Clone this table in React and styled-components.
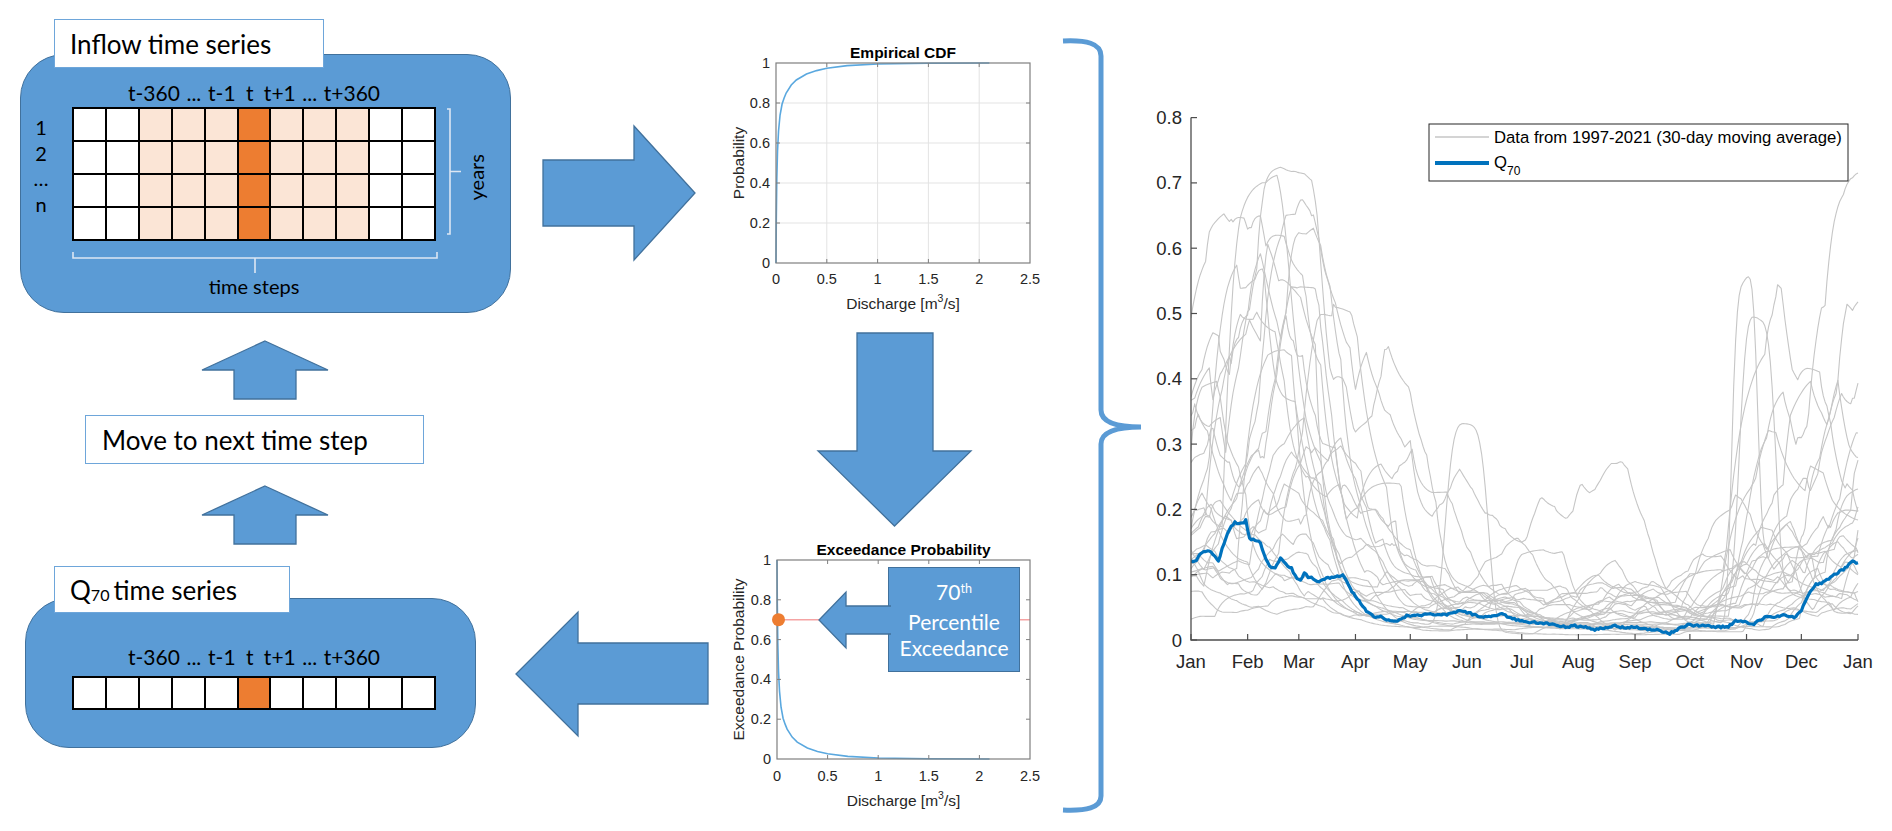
import React from "react";
import styled, { createGlobalStyle } from "styled-components";

const BLUE = "#5b9bd5";
const BLUE_EDGE = "#41719c";
const ORANGE = "#ed7d31";
const PEACH = "#fbe5d6";
const BRACKET = "#dde7f3";
const GREY_LINE = "#c6c6c6";
const Q_BLUE = "#0072bd";

const GlobalStyle = createGlobalStyle`
  html, body {
    margin: 0;
    padding: 0;
    background: #fff;
  }
  body {
    font-family: Lato, "Open Sans", sans-serif;
    color: #000;
  }
`;

const Page = styled.div`
  width: 1892px;
  height: 831px;
  display: flex;
  overflow: hidden;
  background: #fff;
`;

/* ---------- left column: series panels ---------- */

const FlowColumn = styled.div`
  flex: none;
  width: 516px;
  display: flex;
  flex-direction: column;
  padding-top: 19px;
  box-sizing: border-box;
`;

const Tab = styled.div`
  position: relative;
  z-index: 1;
  box-sizing: border-box;
  width: ${(p) => p.$width}px;
  height: ${(p) => p.$height}px;
  margin-left: ${(p) => p.$left}px;
  margin-top: ${(p) => p.$top || 0}px;
  padding-left: 15px;
  display: flex;
  align-items: center;
  background: #fff;
  border: 1.5px solid #6ea6da;
  font-size: 26px;
  white-space: nowrap;
`;

const Sub = styled.span`
  position: relative;
  top: 0.32em;
  font-size: 0.62em;
  margin-right: 0.25em;
`;

const Sup = styled.span`
  position: relative;
  top: -0.55em;
  font-size: 0.6em;
`;

const SeriesCard = styled.div`
  box-sizing: border-box;
  width: ${(p) => p.$width}px;
  height: ${(p) => p.$height}px;
  margin-left: ${(p) => p.$left}px;
  margin-top: ${(p) => p.$overlap}px;
  padding-top: ${(p) => p.$padTop}px;
  display: flex;
  flex-direction: column;
  background: ${BLUE};
  border: 1px solid ${BLUE_EDGE};
  border-radius: 44px;
`;

const StepLabels = styled.div`
  display: grid;
  grid-template-columns: repeat(11, 1fr);
  width: 364px;
  height: 24px;
  margin-left: ${(p) => p.$offset}px;
  margin-bottom: ${(p) => p.$gap}px;
  font-size: 21px;
  line-height: 24px;
`;

const StepLabel = styled.div`
  display: flex;
  justify-content: center;
  white-space: nowrap;
`;

const MatrixRow = styled.div`
  display: flex;
  align-items: flex-start;
  margin-left: ${(p) => p.$offset || 0}px;
`;

const RowIndex = styled.div`
  flex: none;
  width: 20px;
  margin-left: 10px;
  margin-right: 21px;
  padding-top: 8px;
  display: flex;
  flex-direction: column;
  align-items: center;
  font-size: 20px;
  line-height: 25.5px;
`;

const Matrix = styled.div`
  flex: none;
  box-sizing: border-box;
  width: 364px;
  height: ${(p) => p.$rows * 33.5}px;
  display: grid;
  grid-template-columns: repeat(11, 1fr);
  grid-template-rows: repeat(${(p) => p.$rows}, 1fr);
  border-top: 2px solid #000;
  border-left: 2px solid #000;
  background: #000;
`;

const Cell = styled.div`
  box-sizing: border-box;
  border-right: 2px solid #000;
  border-bottom: 2px solid #000;
  background: ${(p) =>
    p.$tone === "current" ? ORANGE : p.$tone === "window" ? PEACH : "#fff"};
`;

const SideBracket = styled.svg`
  flex: none;
  display: block;
  margin-left: 10px;
  margin-top: 1px;
`;

const YearsLabel = styled.div`
  align-self: center;
  margin-left: 3px;
  margin-top: 6px;
  writing-mode: vertical-rl;
  transform: rotate(180deg);
  font-size: 20px;
  line-height: 22px;
`;

const BottomBracket = styled.svg`
  display: block;
  margin-left: ${(p) => p.$offset}px;
  margin-top: 11px;
`;

const AxisCaption = styled.div`
  width: 364px;
  margin-left: ${(p) => p.$offset}px;
  text-align: center;
  font-size: 20px;
  line-height: 24px;
`;

const NoteBox = styled.div`
  box-sizing: border-box;
  width: 339px;
  height: 49px;
  margin-left: 85px;
  margin-top: 16px;
  padding-left: 16px;
  display: flex;
  align-items: center;
  background: #fff;
  border: 1.5px solid #6ea6da;
  font-size: 26px;
  white-space: nowrap;
`;

/* ---------- block arrows ---------- */

const BlockArrow = styled.svg`
  flex: none;
  display: block;
  overflow: visible;
  margin-top: ${(p) => p.$top || 0}px;
  margin-left: ${(p) => p.$left || 0}px;
`;

const ArrowFill = styled.polygon`
  fill: ${BLUE};
  stroke: ${BLUE_EDGE};
  stroke-width: 1.3;
  stroke-linejoin: miter;
`;

const ArrowColumn = styled.div`
  flex: none;
  width: 200px;
  display: flex;
  flex-direction: column;
`;

/* ---------- middle column: probability plots ---------- */

const PlotColumn = styled.div`
  flex: none;
  width: 340px;
  padding-top: 40px;
  display: flex;
  flex-direction: column;
`;

const PlotFrame = styled.div`
  position: relative;
  width: 340px;
  height: ${(p) => p.$height}px;
  margin-top: ${(p) => p.$top || 0}px;
`;

const PlotSvg = styled.svg`
  display: block;
  overflow: visible;
`;

const PlotText = styled.text`
  font-family: "Liberation Sans", Arial, sans-serif;
  font-size: ${(p) => p.$size || 14.5}px;
  font-weight: ${(p) => (p.$bold ? 700 : 400)};
  fill: ${(p) => p.$color || "#262626"};
`;

const Callout = styled.div`
  position: absolute;
  left: 103px;
  top: 37px;
  display: flex;
  align-items: center;
`;

const CalloutBox = styled.div`
  box-sizing: border-box;
  width: 132px;
  height: 105px;
  display: flex;
  flex-direction: column;
  align-items: center;
  justify-content: center;
  background: ${BLUE};
  border: 1.3px solid ${BLUE_EDGE};
  color: #fff;
  font-size: 21px;
  line-height: 26px;
`;

const CalloutArrow = styled.svg`
  position: relative;
  z-index: 1;
  flex: none;
  display: block;
  overflow: visible;
  margin-right: -3px;
`;

/* ---------- brace and seasonal chart ---------- */

const BraceColumn = styled.div`
  flex: none;
  width: 90px;
`;

const ChartColumn = styled.div`
  flex: none;
  width: 746px;
`;

/* ---------- data ---------- */

const LABELS = ["", "", "t-360", "...", "t-1", "t", "t+1", "...", "t+360", "", ""];
const toneFor = (i, withWindow) =>
  i === 5 ? "current" : withWindow && i >= 2 && i <= 8 ? "window" : "plain";

const CDF = [
  [0, 0], [0.003, 0.22], [0.008, 0.42], [0.015, 0.56], [0.025, 0.66],
  [0.04, 0.74], [0.06, 0.795], [0.08, 0.825], [0.1, 0.85], [0.15, 0.89],
  [0.2, 0.915], [0.3, 0.945], [0.4, 0.962], [0.5, 0.974], [0.7, 0.987],
  [1, 0.995], [1.5, 0.999], [2.1, 1],
];

const Q70 = [
  [0, 0.12], [3, 0.122], [6, 0.135], [10, 0.135], [13, 0.13], [15, 0.12],
  [17, 0.14], [21, 0.17], [24, 0.18], [28, 0.178], [30, 0.183], [32, 0.155],
  [35, 0.153], [38, 0.15], [40, 0.13], [43, 0.112], [46, 0.11], [49, 0.125],
  [52, 0.115], [55, 0.11], [58, 0.093], [60, 0.092], [62, 0.103], [64, 0.097],
  [70, 0.09], [75, 0.095], [80, 0.097], [83, 0.1], [88, 0.075], [92, 0.06],
  [96, 0.045], [100, 0.035], [104, 0.036], [108, 0.03], [112, 0.028],
  [118, 0.037], [125, 0.038], [132, 0.04], [140, 0.038], [146, 0.045],
  [152, 0.042], [158, 0.035], [164, 0.036], [170, 0.04], [176, 0.033],
  [182, 0.028], [188, 0.027], [195, 0.025], [200, 0.022], [206, 0.02],
  [210, 0.022], [215, 0.02], [220, 0.016], [226, 0.018], [232, 0.022],
  [238, 0.018], [244, 0.02], [250, 0.016], [256, 0.015], [262, 0.01],
  [266, 0.016], [272, 0.023], [280, 0.022], [288, 0.02], [294, 0.02],
  [298, 0.03], [302, 0.028], [308, 0.025], [314, 0.035], [320, 0.036],
  [326, 0.038], [330, 0.035], [334, 0.045], [338, 0.07], [342, 0.085],
  [346, 0.088], [352, 0.1], [358, 0.11], [362, 0.122], [365, 0.117],
];

const MONTHS = [
  ["Jan", 0], ["Feb", 31], ["Mar", 59], ["Apr", 90], ["May", 120], ["Jun", 151],
  ["Jul", 181], ["Aug", 212], ["Sep", 243], ["Oct", 273], ["Nov", 304],
  ["Dec", 334], ["Jan", 365],
];

function mulberry32(a) {
  return function () {
    a |= 0;
    a = (a + 0x6d2b79f5) | 0;
    let t = Math.imul(a ^ (a >>> 15), 1 | a);
    t = (t + Math.imul(t ^ (t >>> 7), 61 | t)) ^ t;
    return ((t ^ (t >>> 14)) >>> 0) / 4294967296;
  };
}

// bumps added after smoothing, so a few years carry the distinctive peaks
const SPECIALS = [
  { year: 3, c: 151, w: 13, amp: 0.31 },
  { year: 7, c: 303, w: 8, amp: 0.5 },
  { year: 12, c: 310, w: 11, amp: 0.42 },
];

// keeps the highest years below 0.74 without flattening them
const softCap = (v) => (v > 0.45 ? 0.45 + 0.28 * Math.tanh((v - 0.45) / 0.28) : v);

function buildYears() {
  const rand = mulberry32(2021);
  const pad = 15;
  const years = [];
  for (let y = 0; y < 25; y++) {
    const wet = 0.12 + Math.pow(rand(), 1.35) * 1.0;
    const wEnd = 35 + rand() * 75;
    const aStart = 265 + rand() * 85;
    const autWet = 0.08 + Math.pow(rand(), 1.3) * 0.85;
    const summer = 0.004 + Math.pow(rand(), 2) * 0.07;
    const base = 0.005 + rand() * 0.015;
    const level = (d) => {
      if (d < wEnd) return 0.33 * wet;
      if (d < aStart) return summer + 0.33 * wet * Math.exp(-(d - wEnd) / 16);
      return summer + 0.33 * autWet * Math.min(1, (d - aStart) / 25);
    };
    const raw = new Array(366 + 2 * pad).fill(0);
    for (let k = 0; k < raw.length; k++) {
      const d = k - pad;
      raw[k] += base + 0.06 * wet * (d < wEnd ? 1 : Math.exp(-(d - wEnd) / 30));
      if (rand() < 0.16) {
        const tau = 2 + rand() * 9;
        const mag = (-Math.log(1 - rand()) * level(d)) / (0.16 * 6.5);
        for (let j = k; j < raw.length; j++) {
          const add = mag * Math.exp(-(j - k) / tau);
          if (add < 1e-4) break;
          raw[j] += add;
        }
      }
    }
    const out = [];
    for (let d = 0; d < 366; d++) {
      let sum = 0;
      for (let j = 0; j < 30; j++) sum += raw[d + j];
      let v = sum / 30;
      SPECIALS.forEach((sp) => {
        if (sp.year === y) v += sp.amp * Math.exp(-Math.pow((d - sp.c) / sp.w, 4));
      });
      out.push(softCap(v));
    }
    years.push(out);
  }
  return years;
}

function buildQ70() {
  const rand = mulberry32(70);
  const pts = [];
  for (let d = 0; d <= 365; d++) {
    let i = 0;
    while (i < Q70.length - 2 && Q70[i + 1][0] < d) i++;
    const [d0, v0] = Q70[i];
    const [d1, v1] = Q70[i + 1];
    const t = d1 === d0 ? 0 : (d - d0) / (d1 - d0);
    pts.push([d, v0 + (v1 - v0) * t + (rand() - 0.5) * 0.003]);
  }
  return pts;
}

const YEARS = buildYears();
const Q70_DAILY = buildQ70();

/* ---------- pieces ---------- */

function StepHeader({ offset, gap }) {
  return (
    <StepLabels $offset={offset} $gap={gap}>
      {LABELS.map((l, i) => (
        <StepLabel key={i}>
          <span>{l}</span>
        </StepLabel>
      ))}
    </StepLabels>
  );
}

function TimeMatrix({ rows, withWindow }) {
  const cells = [];
  for (let r = 0; r < rows; r++) {
    for (let c = 0; c < 11; c++) {
      cells.push(<Cell key={`${r}-${c}`} $tone={toneFor(c, withWindow)} />);
    }
  }
  return <Matrix $rows={rows}>{cells}</Matrix>;
}

function UpArrow({ top }) {
  return (
    <BlockArrow $top={top} $left={202} width="126" height="58" viewBox="0 0 126 58">
      <ArrowFill points="63,0 126,29 94,29 94,58 32,58 32,29 0,29" />
    </BlockArrow>
  );
}

function InflowPanel() {
  return (
    <>
      <Tab $width={270} $height={49} $left={54}>
        Inflow time series
      </Tab>
      <SeriesCard $width={491} $height={259} $left={20} $overlap={-14} $padTop={26}>
        <StepHeader offset={51} gap={2} />
        <MatrixRow>
          <RowIndex>
            <span>1</span>
            <span>2</span>
            <span>…</span>
            <span>n</span>
          </RowIndex>
          <TimeMatrix rows={4} withWindow />
          <SideBracket width="16" height="127" viewBox="0 0 16 127">
            <path d="M1 1 H4 V126 H1 M4 63.5 H15" fill="none" stroke={BRACKET} strokeWidth="1.6" />
          </SideBracket>
          <YearsLabel>years</YearsLabel>
        </MatrixRow>
        <BottomBracket $offset={51} width="366" height="22" viewBox="0 0 366 22">
          <path d="M1 0 V6 H365 V0 M183 6 V21" fill="none" stroke={BRACKET} strokeWidth="1.6" />
        </BottomBracket>
        <AxisCaption $offset={51}>time steps</AxisCaption>
      </SeriesCard>
    </>
  );
}

function QuantilePanel() {
  return (
    <>
      <Tab $width={236} $height={47} $left={54} $top={22}>
        Q<Sub>70</Sub>time series
      </Tab>
      <SeriesCard $width={451} $height={150} $left={25} $overlap={-15} $padTop={46}>
        <StepHeader offset={46} gap={7} />
        <MatrixRow $offset={46}>
          <TimeMatrix rows={1} />
        </MatrixRow>
      </SeriesCard>
    </>
  );
}

function fmt(v) {
  return String(Math.round(v * 10) / 10);
}

function ProbabilityPlot({ box, title, titleY, yLabel, tickY, labelY, grid, exceedance }) {
  const { x0, x1, y0, y1 } = box;
  const sx = (v) => x0 + (v / 2.5) * (x1 - x0);
  const sy = (p) => y1 - p * (y1 - y0);
  const xt = [0, 0.5, 1, 1.5, 2, 2.5];
  const yt = [0, 0.2, 0.4, 0.6, 0.8, 1];
  const curve = CDF.map(([x, p]) => `${sx(x)},${sy(exceedance ? 1 - p : p)}`).join(" ");
  const cx = (x0 + x1) / 2;
  const cy = (y0 + y1) / 2;
  return (
    <>
      {grid &&
        xt.slice(1, -1).map((v) => (
          <line key={`gx${v}`} x1={sx(v)} x2={sx(v)} y1={y0} y2={y1} stroke="#e3e3e3" strokeWidth="1" />
        ))}
      {grid &&
        yt.slice(1, -1).map((v) => (
          <line key={`gy${v}`} x1={x0} x2={x1} y1={sy(v)} y2={sy(v)} stroke="#e3e3e3" strokeWidth="1" />
        ))}
      {exceedance && (
        <line x1={x0} x2={x1} y1={sy(0.7)} y2={sy(0.7)} stroke="#f5a3a3" strokeWidth="1.4" />
      )}
      <polyline points={curve} fill="none" stroke="#5aa8df" strokeWidth="1.6" />
      <rect x={x0} y={y0} width={x1 - x0} height={y1 - y0} fill="none" stroke="#7f7f7f" strokeWidth="1.2" />
      {xt.slice(1, -1).map((v) => (
        <path key={`tx${v}`} d={`M${sx(v)} ${y1} v-4 M${sx(v)} ${y0} v4`} stroke="#7f7f7f" strokeWidth="1" />
      ))}
      {yt.slice(1, -1).map((v) => (
        <path key={`ty${v}`} d={`M${x0} ${sy(v)} h4 M${x1} ${sy(v)} h-4`} stroke="#7f7f7f" strokeWidth="1" />
      ))}
      {exceedance && <circle cx={x0 + 1.5} cy={sy(0.7)} r="6.5" fill={ORANGE} />}
      {yt.map((v) => (
        <PlotText key={`ly${v}`} x={x0 - 6} y={sy(v) + 5} textAnchor="end">
          {fmt(v)}
        </PlotText>
      ))}
      {xt.map((v) => (
        <PlotText key={`lx${v}`} x={sx(v)} y={tickY} textAnchor="middle">
          {String(v)}
        </PlotText>
      ))}
      <PlotText x={cx} y={titleY} textAnchor="middle" $bold $size={15.5} $color="#000">
        {title}
      </PlotText>
      <PlotText x={cx} y={labelY} textAnchor="middle" $size={15.5}>
        Discharge [m
        <tspan dy="-7" fontSize="10.5">3</tspan>
        <tspan dy="7">/s]</tspan>
      </PlotText>
      <PlotText
        x={22}
        y={cy}
        textAnchor="middle"
        dominantBaseline="central"
        $size={15.5}
        transform={`rotate(-90 22 ${cy})`}
      >
        {yLabel}
      </PlotText>
    </>
  );
}

function Brace() {
  return (
    <svg width="90" height="831" viewBox="0 0 90 831" style={{ display: "block" }}>
      <path
        d="M7 41 C30 40 45 43 45 56 L45 410 C45 422 60 427 85 427 C60 427 45 432 45 444 L45 796 C45 808 30 811 7 810"
        fill="none"
        stroke={BLUE}
        strokeWidth="5"
      />
    </svg>
  );
}

const CX0 = 45;
const CX1 = 712;
const CY0 = 640;
const CPER = 653;
const cxDay = (d) => CX0 + (d * (CX1 - CX0)) / 365;
const cyVal = (v) => CY0 - v * CPER;

function SeasonalChart() {
  const yTicks = [0, 0.1, 0.2, 0.3, 0.4, 0.5, 0.6, 0.7, 0.8];
  return (
    <svg width="746" height="700" viewBox="0 0 746 700" style={{ display: "block" }}>
      <defs>
        <clipPath id="plotArea">
          <rect x={CX0} y={100} width={CX1 - CX0 + 1} height={CY0 - 100} />
        </clipPath>
      </defs>
      <g clipPath="url(#plotArea)">
        {YEARS.map((ys, i) => (
          <polyline
            key={i}
            points={ys.map((v, d) => `${cxDay(Math.min(d, 365)).toFixed(1)},${cyVal(v).toFixed(1)}`).join(" ")}
            fill="none"
            stroke={GREY_LINE}
            strokeWidth="1.1"
            strokeLinejoin="round"
          />
        ))}
        <polyline
          points={Q70_DAILY.map(([d, v]) => `${cxDay(d).toFixed(1)},${cyVal(v).toFixed(1)}`).join(" ")}
          fill="none"
          stroke={Q_BLUE}
          strokeWidth="3.2"
          strokeLinejoin="round"
        />
      </g>
      <path d={`M${CX0} ${cyVal(0.8)} V${CY0} H${CX1}`} fill="none" stroke="#4d4d4d" strokeWidth="1.3" />
      {yTicks.map((v) => (
        <g key={v}>
          <path d={`M${CX0} ${cyVal(v)} h6`} stroke="#4d4d4d" strokeWidth="1.2" />
          <PlotText x={36} y={cyVal(v) + 6.5} textAnchor="end" $size={18.5}>
            {fmt(v)}
          </PlotText>
        </g>
      ))}
      {MONTHS.map(([m, d], i) => (
        <g key={i}>
          <path d={`M${cxDay(d)} ${CY0} v-6`} stroke="#4d4d4d" strokeWidth="1.2" />
          <PlotText x={cxDay(d)} y={668} textAnchor="middle" $size={18.5}>
            {m}
          </PlotText>
        </g>
      ))}
      <rect x="283" y="124" width="419" height="57" fill="#fff" stroke="#262626" strokeWidth="1" />
      <line x1="289" x2="343" y1="137" y2="137" stroke={GREY_LINE} strokeWidth="1.3" />
      <PlotText x="348" y="143" $size={16.7} $color="#000">
        Data from 1997-2021 (30-day moving average)
      </PlotText>
      <line x1="289" x2="343" y1="163" y2="163" stroke={Q_BLUE} strokeWidth="4" />
      <PlotText x="348" y="168" $size={16.7} $color="#000">
        Q<tspan dy="7" fontSize="12">70</tspan>
      </PlotText>
    </svg>
  );
}

export default function App() {
  return (
    <Page>
      <GlobalStyle />
      <FlowColumn>
        <InflowPanel />
        <UpArrow top={28} />
        <NoteBox>Move to next time step</NoteBox>
        <UpArrow top={22} />
        <QuantilePanel />
      </FlowColumn>

      <ArrowColumn>
        <BlockArrow $top={126} $left={27} width="152" height="134" viewBox="0 0 152 134">
          <ArrowFill points="0,34 91,34 91,0 152,67 91,134 91,100 0,100" />
        </BlockArrow>
        <BlockArrow $top={352} width="192" height="124" viewBox="0 0 192 124">
          <ArrowFill points="0,62 62,0 62,31 192,31 192,92 62,92 62,124" />
        </BlockArrow>
      </ArrowColumn>

      <PlotColumn>
        <PlotFrame $height={285}>
          <PlotSvg width="340" height="285" viewBox="0 0 340 285">
            <ProbabilityPlot
              box={{ x0: 60, x1: 314, y0: 23, y1: 223 }}
              title="Empirical CDF"
              titleY={18}
              yLabel="Probability"
              tickY={244}
              labelY={269}
              grid
            />
          </PlotSvg>
        </PlotFrame>
        <BlockArrow $top={8} $left={102} width="153" height="193" viewBox="0 0 153 193">
          <ArrowFill points="39,0 115,0 115,118 153,118 76.5,193 0,118 39,118" />
        </BlockArrow>
        <PlotFrame $height={295} $top={4}>
          <PlotSvg width="340" height="295" viewBox="0 0 340 295">
            <ProbabilityPlot
              box={{ x0: 61, x1: 314, y0: 30, y1: 229 }}
              title="Exceedance Probability"
              titleY={25}
              yLabel="Exceedance Probability"
              tickY={251}
              labelY={276}
              exceedance
            />
          </PlotSvg>
          <Callout>
            <CalloutArrow width="72" height="56" viewBox="0 0 72 56">
              <polygon points="0,28 27,0 27,14 75,14 75,42 27,42 27,56" fill={BLUE} />
              <polyline
                points="72,14 27,14 27,0 0,28 27,56 27,42 72,42"
                fill="none"
                stroke={BLUE_EDGE}
                strokeWidth="1.3"
              />
            </CalloutArrow>
            <CalloutBox>
              <span>
                70<Sup>th</Sup>
              </span>
              <span>Percentile</span>
              <span>Exceedance</span>
            </CalloutBox>
          </Callout>
        </PlotFrame>
      </PlotColumn>

      <BraceColumn>
        <Brace />
      </BraceColumn>

      <ChartColumn>
        <SeasonalChart />
      </ChartColumn>
    </Page>
  );
}
